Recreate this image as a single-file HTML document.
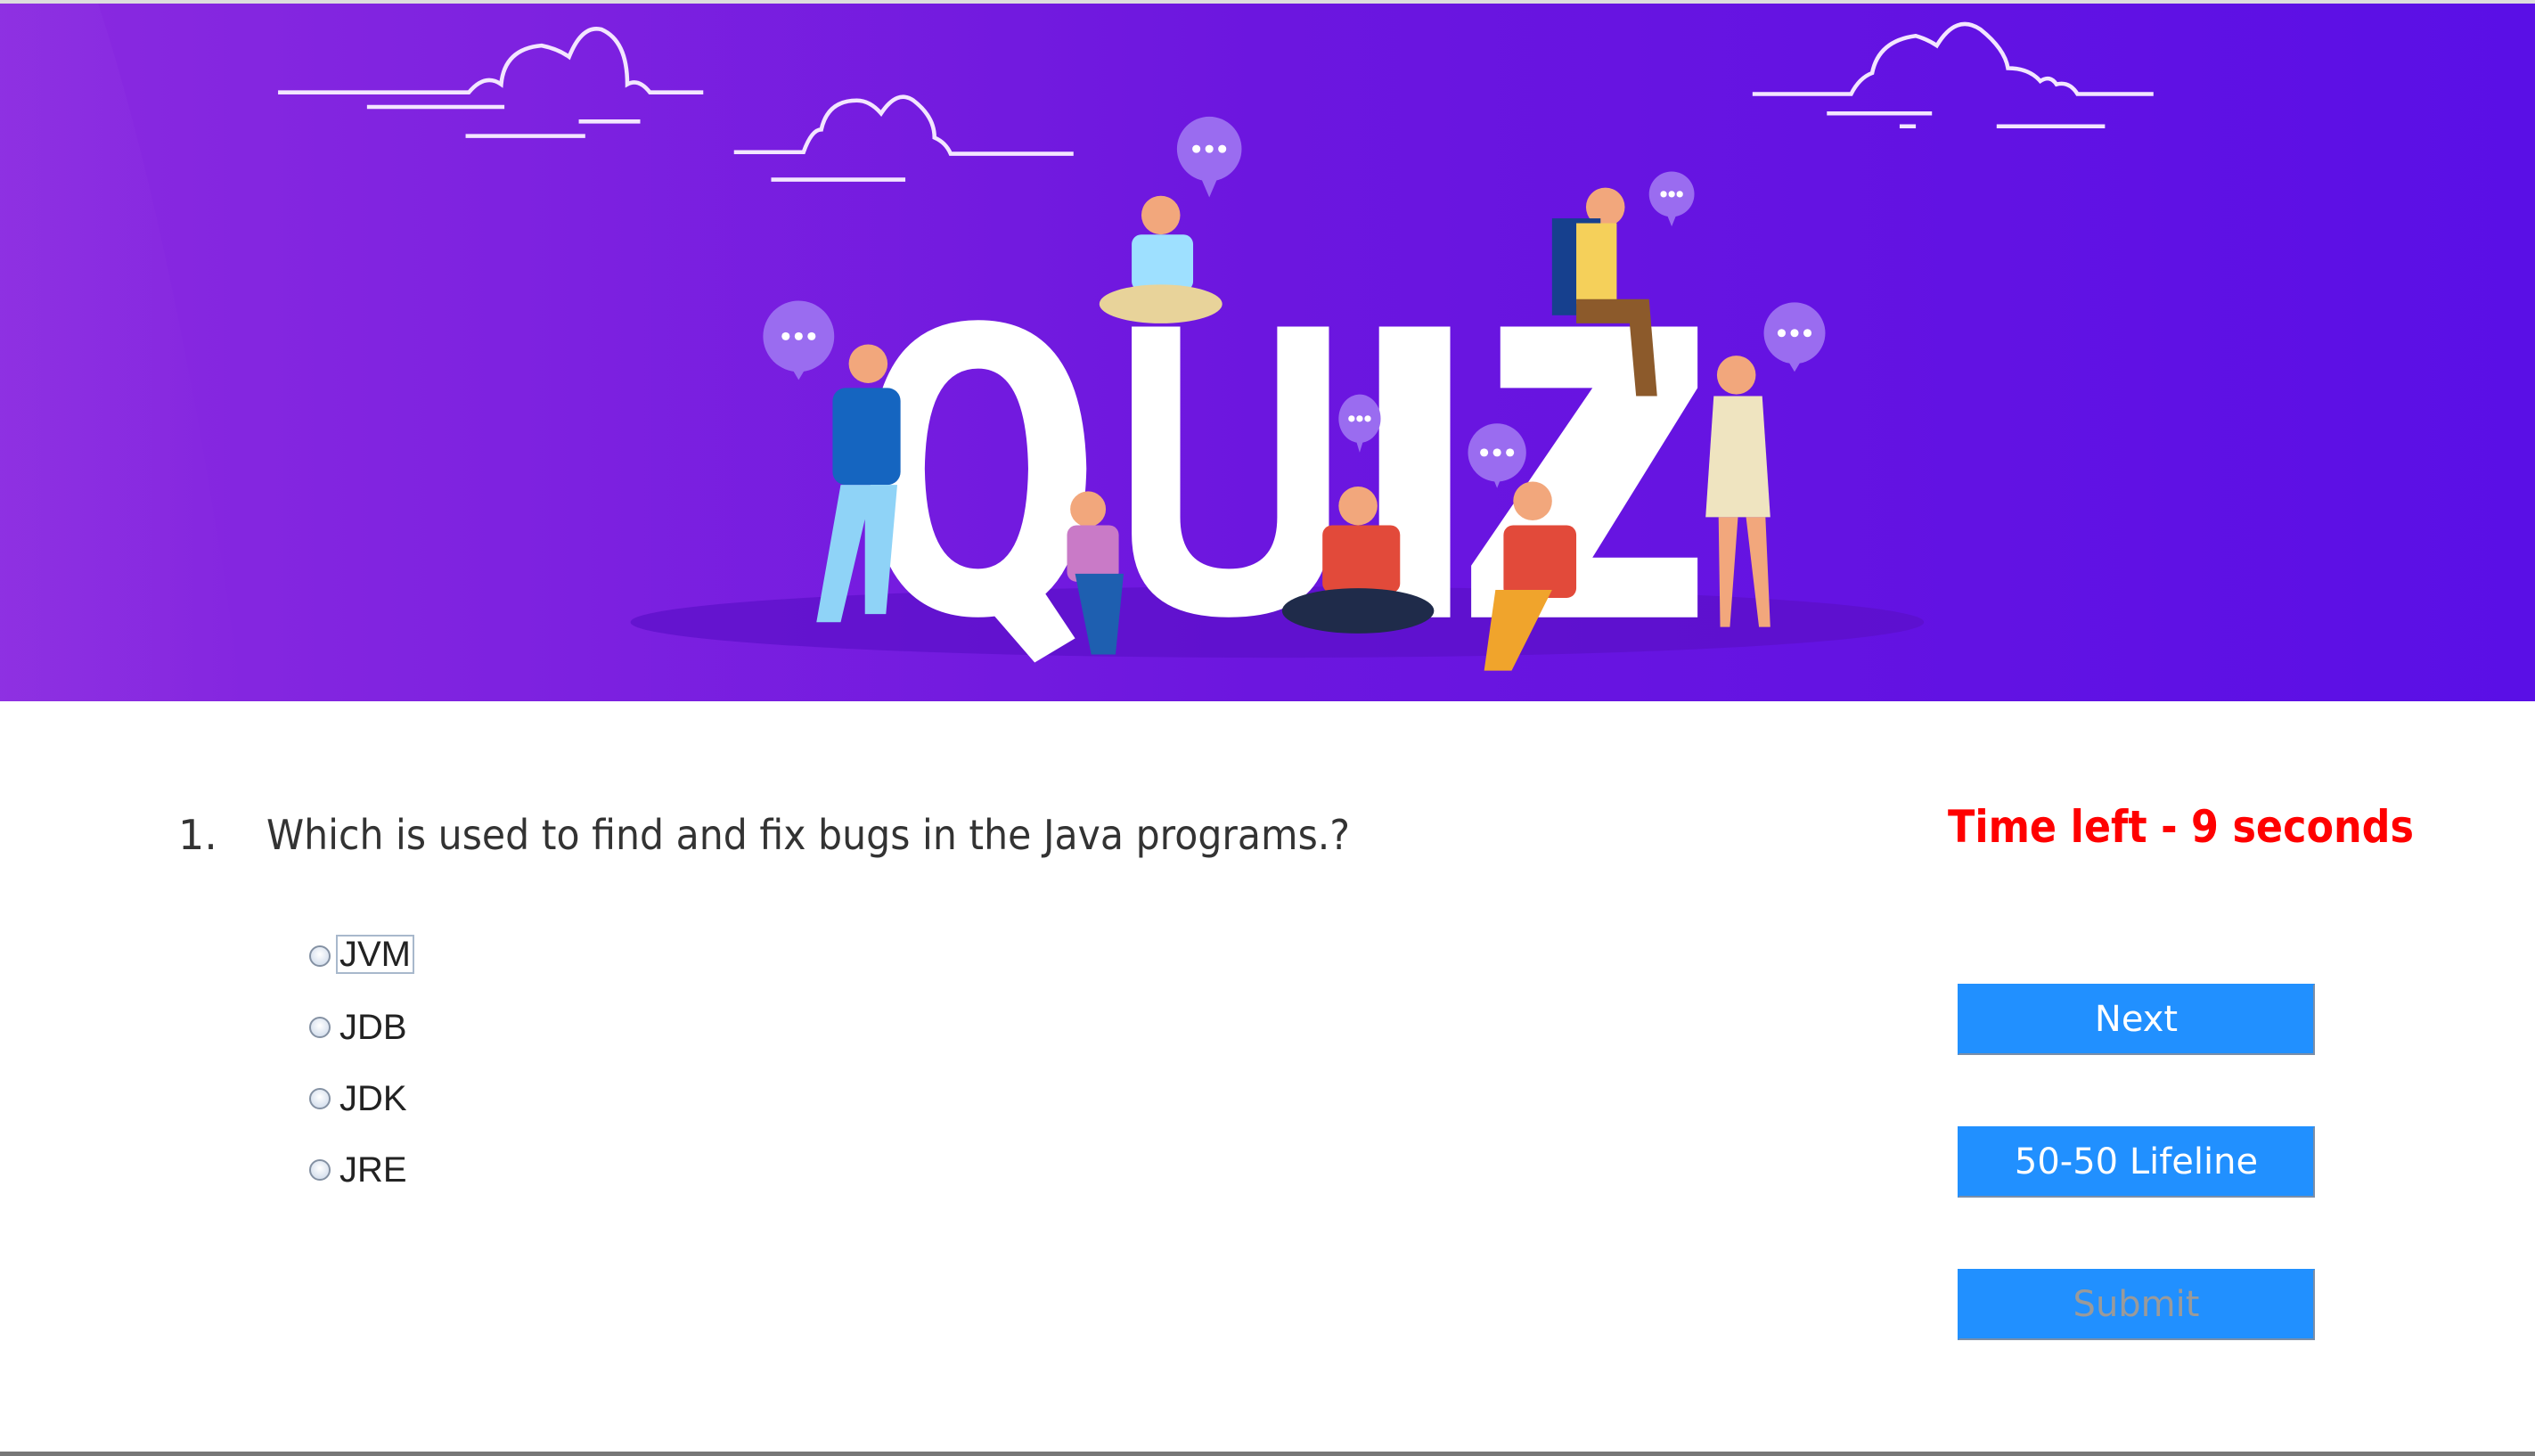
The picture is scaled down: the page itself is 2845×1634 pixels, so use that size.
<!DOCTYPE html>
<html><head><meta charset="utf-8"><style>
html,body{margin:0;padding:0;background:#fff;width:2845px;height:1634px;overflow:hidden;position:relative;font-family:"Liberation Sans",sans-serif}
.b{position:absolute}
.btn{position:absolute;left:2197px;width:397px;height:76px;background:#2190ff;border:2px solid #2190ff;border-right-color:#7a8ea8;border-bottom-color:#7a8ea8;color:#fff;text-align:center;line-height:76px;font-family:'DejaVu Sans','Liberation Sans',sans-serif;font-size:40px}
.radio{position:absolute;left:347px;width:20px;height:20px;border-radius:50%;border:2px solid #8491a3;background:radial-gradient(circle at 50% 40%,#fff,#c9d6e8)}
.opt{position:absolute;left:381px;font-size:40px;color:#222;line-height:40px}
</style></head><body>
<div class="b" style="left:0;top:0;width:2845px;height:4px;background:#ddd"></div>
<svg class="b" style="left:0;top:4px" width="2845" height="783" viewBox="0 2 1568 432" preserveAspectRatio="none">
<defs><linearGradient id="g" x1="0" x2="1" y1="0" y2="0"><stop offset="0" stop-color="#8a2ae0"/><stop offset="0.5" stop-color="#6c16df"/><stop offset="1" stop-color="#5a0fe6"/></linearGradient>
<linearGradient id="l" x1="0" x2="1"><stop offset="0" stop-color="#9a45e6" stop-opacity=".25"/><stop offset="1" stop-color="#9a45e6" stop-opacity="0"/></linearGradient></defs>
<rect x="0" y="0" width="1568" height="434" fill="url(#g)"/>
<path d="M0 0 H60 Q110 150 150 434 H0Z" fill="url(#l)"/>
<ellipse cx="790" cy="385" rx="400" ry="22" fill="#5b0fc8" opacity=".7"/>
<g fill="none" stroke="#f3e6ff" stroke-width="2.5">
<path d="M172 57 H290 Q300 45 310 52 Q312 30 335 28 Q345 30 352 35 Q360 15 372 18 Q388 25 388 52 Q395 48 402 57 H435"/>
<path d="M227 66 H312 M288 84 H362 M358 75 H396"/>
<path d="M454 94 H497 Q502 80 508 80 Q512 62 530 62 Q538 62 545 70 Q555 55 565 62 Q578 72 578 85 Q585 88 588 95 H664 M477 111 H560"/>
<path d="M1084 58 H1145 Q1150 48 1158 45 Q1162 25 1185 22 Q1192 24 1198 28 Q1210 8 1225 18 Q1240 30 1242 42 Q1255 42 1262 50 Q1268 46 1272 52 Q1280 50 1285 58 H1332 M1130 70 H1195 M1175 78 H1185 M1235 78 H1302"/>
</g>
<g fill="#fff">
<path d="M605 198 Q670 198 672 290 Q670 382 605 382 Q540 382 538 290 Q540 198 605 198Z M605 228 Q573 228 572 290 Q573 352 605 352 Q635 352 636 290 Q635 228 605 228Z" fill-rule="evenodd"/>
<polygon points="595,358 635,350 665,395 640,410"/>
<path d="M700 202 H730 V320 Q730 352 760 352 Q790 352 790 320 V202 H822 V330 Q822 382 760 382 Q700 382 700 330Z"/>
<rect x="853" y="202" width="44" height="180"/>
<polygon points="928,202 1050,202 1050,240 985,345 1050,345 1050,382 910,382 910,350 985,240 928,240"/>
</g>
<g fill="#9a6cf0">
<circle cx="494" cy="208" r="22"/><polygon points="488,225 500,225 494,235"/>
<circle cx="748" cy="92" r="20"/><polygon points="742,108 754,108 748,122"/>
<circle cx="1034" cy="120" r="14"/><polygon points="1030,130 1038,130 1034,140"/>
<circle cx="1110" cy="206" r="19"/><polygon points="1104,220 1116,220 1110,230"/>
<ellipse cx="841" cy="259" rx="13" ry="15"/><polygon points="838,270 844,270 841,280"/>
<circle cx="926" cy="280" r="18"/><polygon points="922,292 930,292 926,302"/>
</g>
<g fill="#fff"><circle cx="486" cy="208" r="2.5"/><circle cx="494" cy="208" r="2.5"/><circle cx="502" cy="208" r="2.5"/>
<circle cx="740" cy="92" r="2.5"/><circle cx="748" cy="92" r="2.5"/><circle cx="756" cy="92" r="2.5"/>
<circle cx="1029" cy="120" r="2"/><circle cx="1034" cy="120" r="2"/><circle cx="1039" cy="120" r="2"/>
<circle cx="836" cy="259" r="2"/><circle cx="841" cy="259" r="2"/><circle cx="846" cy="259" r="2"/>
<circle cx="1102" cy="206" r="2.5"/><circle cx="1110" cy="206" r="2.5"/><circle cx="1118" cy="206" r="2.5"/>
<circle cx="918" cy="280" r="2.5"/><circle cx="926" cy="280" r="2.5"/><circle cx="934" cy="280" r="2.5"/></g>
<g><circle cx="537" cy="225" r="12" fill="#f2a77c"/><rect x="515" y="240" width="42" height="60" rx="8" fill="#1565c0"/><path d="M520 300 L505 385 H520 L540 300Z M535 300 L535 380 H548 L555 300Z" fill="#8fd3f7"/></g>
<g><circle cx="718" cy="133" r="12" fill="#f2a77c"/><rect x="700" y="145" width="38" height="35" rx="6" fill="#9ee0ff"/><ellipse cx="718" cy="188" rx="38" ry="12" fill="#e8d39a"/></g>
<g><circle cx="993" cy="128" r="12" fill="#f2a77c"/><rect x="960" y="135" width="30" height="60" fill="#16408e"/><rect x="975" y="138" width="25" height="50" fill="#f5d05a"/><path d="M975 185 H1020 L1025 245 H1012 L1008 200 H975Z" fill="#8c5a2b"/></g>
<g><circle cx="1074" cy="232" r="12" fill="#f2a77c"/><path d="M1060 245 H1090 L1095 320 H1055Z" fill="#efe4c0"/><path d="M1063 320 H1075 L1070 388 H1064Z M1080 320 H1092 L1095 388 H1088Z" fill="#f2a77c"/></g>
<g><circle cx="673" cy="315" r="11" fill="#f2a77c"/><rect x="660" y="325" width="32" height="35" rx="6" fill="#c97ac7"/><path d="M665 355 H695 L690 405 H675Z" fill="#1e5fb0"/></g>
<g><circle cx="840" cy="313" r="12" fill="#f2a77c"/><rect x="818" y="325" width="48" height="42" rx="6" fill="#e24a3a"/><ellipse cx="840" cy="378" rx="47" ry="14" fill="#1f2b4a"/></g>
<g><circle cx="948" cy="310" r="12" fill="#f2a77c"/><rect x="930" y="325" width="45" height="45" rx="6" fill="#e24a3a"/><path d="M925 365 H960 L935 415 H918Z" fill="#f0a42c"/></g>
</svg>
<div class="b" style="left:200px;top:910px;font-size:46px;color:#333;font-family:'DejaVu Sans','Liberation Sans',sans-serif">1.</div>
<svg class="b" style="left:299px;top:900px" width="1230" height="70"><text x="0" y="53" font-family="DejaVu Sans, Liberation Sans, sans-serif" font-size="46" fill="#333" textLength="1216" lengthAdjust="spacingAndGlyphs">Which is used to find and fix bugs in the Java programs.?</text></svg>
<svg class="b" style="left:2186px;top:890px" width="540" height="80"><text x="0" y="55" font-family="DejaVu Sans, Liberation Sans, sans-serif" font-weight="bold" font-size="50" fill="#ff0000" textLength="523" lengthAdjust="spacingAndGlyphs">Time left - 9 seconds</text></svg>
<div class="radio" style="top:1061px"></div><div class="opt" style="top:1049px;border:2px solid #a8b8cc;left:377px;padding:0 2px">JVM</div>
<div class="radio" style="top:1141px"></div><div class="opt" style="top:1133px">JDB</div>
<div class="radio" style="top:1221px"></div><div class="opt" style="top:1213px">JDK</div>
<div class="radio" style="top:1301px"></div><div class="opt" style="top:1293px">JRE</div>
<div class="btn" style="top:1104px">Next</div>
<div class="btn" style="top:1264px">50-50 Lifeline</div>
<div class="btn" style="top:1424px;color:#9a9a9a">Submit</div>
<div class="b" style="left:0;top:1629px;width:2845px;height:5px;background:#777"></div>
</body></html>
